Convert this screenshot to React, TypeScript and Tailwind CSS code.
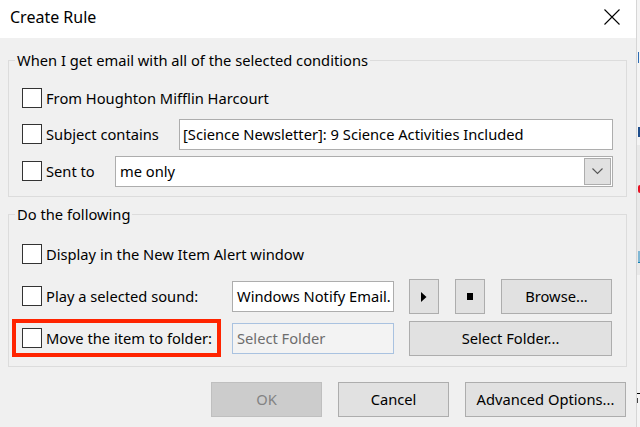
import React from "react";

function Check() {
  return <div className="w-[20px] h-[20px] shrink-0 border border-[#333333] bg-white" />;
}

function Btn({ w, h = "h-[35px]", children, disabled }: { w: string; h?: string; children?: React.ReactNode; disabled?: boolean }) {
  return (
    <div
      className={
        "shrink-0 flex items-center justify-center border " +
        (disabled ? "border-[#bfbfbf] bg-[#cccccc] text-[#838383] " : "border-[#adadad] bg-[#e1e1e1] ") +
        w +
        " " +
        h
      }
    >
      {children}
    </div>
  );
}

export default function App() {
  return (
    <div className="w-[640px] h-[427px] flex overflow-hidden bg-[#f0f0f0] font-['Noto_Sans',sans-serif] text-[14.7px] text-black">
      <div className="w-[636px] h-full flex flex-col shrink-0">
        {/* Title bar */}
        <div className="h-[38px] bg-white flex items-start justify-between pl-[10px] pr-[16px] shrink-0">
          <span className="mt-[6px] leading-[22px] text-[16px]">Create Rule</span>
          <svg className="mt-[9px]" width="16" height="16" viewBox="0 0 16 16">
            <path d="M0.5 0.5 L15.5 15.5 M15.5 0.5 L0.5 15.5" stroke="#000" strokeWidth="1.1" fill="none" />
          </svg>
        </div>

        <div className="flex-1 flex flex-col pl-[8px] pr-[9px] pt-[12px]">
          {/* Group 1 */}
          <fieldset className="border border-[#dcdcdc] p-0 m-0 min-w-0">
            <legend className="ml-[6px] px-[2px] leading-[20px]">When I get email with all of the selected conditions</legend>
            <div className="pl-[13px] pr-[13px] pt-[18px] pb-[9px] flex flex-col">
              <div className="h-[20px] flex items-center">
                <Check />
                <span className="ml-[4px]">From Houghton Mifflin Harcourt</span>
              </div>
              <div className="h-[31px] mt-[11px] flex items-center">
                <div className="w-[157px] flex items-center shrink-0">
                  <Check />
                  <span className="ml-[4px]">Subject contains</span>
                </div>
                <div className="flex-1 h-[31px] border border-[#adadad] bg-white flex items-center pl-[3px] whitespace-nowrap overflow-hidden">
                  [Science Newsletter]: 9 Science Activities Included
                </div>
              </div>
              <div className="h-[31px] mt-[6px] flex items-center">
                <div className="w-[93px] flex items-center shrink-0">
                  <Check />
                  <span className="ml-[4px]">Sent to</span>
                </div>
                <div className="flex-1 h-[31px] border border-[#adadad] bg-white flex items-center justify-between pl-[4px] pr-[1px]">
                  <span>me only</span>
                  <div className="w-[27px] h-[27px] border border-[#adadad] bg-[#e1e1e1] flex items-center justify-center">
                    <svg width="11" height="7" viewBox="0 0 11 7">
                      <path d="M0.5 0.5 L5.5 5.5 L10.5 0.5" stroke="#555" strokeWidth="1.1" fill="none" />
                    </svg>
                  </div>
                </div>
              </div>
            </div>
          </fieldset>

          {/* Group 2 */}
          <fieldset className="border border-[#dcdcdc] p-0 m-0 mt-[7px] min-w-0">
            <legend className="ml-[6px] px-[2px] leading-[20px]">Do the following</legend>
            <div className="pl-[13px] pr-[13px] pt-[20px] pb-[9px] flex flex-col">
              <div className="h-[20px] flex items-center">
                <Check />
                <span className="ml-[4px]">Display in the New Item Alert window</span>
              </div>
              <div className="h-[35px] mt-[15px] flex items-center">
                <div className="w-[210px] flex items-center shrink-0">
                  <Check />
                  <span className="ml-[4px]">Play a selected sound:</span>
                </div>
                <div className="w-[162px] h-[31px] shrink-0 border border-[#adadad] bg-white flex items-center pl-[4px] whitespace-nowrap overflow-hidden">
                  Windows Notify Email.
                </div>
                <div className="ml-[15px]">
                  <Btn w="w-[30px]">
                    <svg width="6" height="10" viewBox="0 0 6 10">
                      <path d="M0 0 L5.5 5 L0 10 Z" fill="#000" />
                    </svg>
                  </Btn>
                </div>
                <div className="ml-[16px]">
                  <Btn w="w-[30px]">
                    <div className="w-[6px] h-[7px] bg-black" />
                  </Btn>
                </div>
                <div className="ml-[16px]">
                  <Btn w="w-[111px]">Browse...</Btn>
                </div>
              </div>
              <div className="h-[38px] mt-[5px] flex items-center">
                <div className="-ml-[10px] w-[209px] h-[38px] shrink-0 border-[4px] border-[#ff2400] flex items-center pl-[6px]">
                  <Check />
                  <span className="ml-[4px] whitespace-nowrap">Move the item to folder:</span>
                </div>
                <div className="ml-[11px] w-[162px] h-[31px] shrink-0 border border-[#a9c2e0] bg-[#f3f3f3] flex items-center pl-[4px] text-[#6d6d6d] whitespace-nowrap overflow-hidden">
                  Select Folder
                </div>
                <div className="ml-[15px]">
                  <Btn w="w-[203px]">Select Folder...</Btn>
                </div>
              </div>
            </div>
          </fieldset>

          {/* Bottom buttons */}
          <div className="mt-[15px] flex pl-[203px]">
            <Btn w="w-[111px]" disabled>OK</Btn>
            <div className="ml-[16px]">
              <Btn w="w-[111px]">Cancel</Btn>
            </div>
            <div className="ml-[16px]">
              <Btn w="w-[161px]">Advanced Options...</Btn>
            </div>
          </div>
        </div>
      </div>

      {/* Background window strip (fragments of the window behind) */}
      <div className="w-[4px] h-full shrink-0 border-l border-[#d6d6d6] bg-[#f4f4f4] flex flex-col">
        <div className="mt-[52px] ml-px w-px h-[11px] bg-[#2e6db4]" />
        <div className="mt-[64px] ml-px w-[2px] h-[10px] bg-[#1f4e8c]" />
        <div className="mt-[8px] h-[130px] bg-[#e9e9e9] flex flex-col">
          <div className="mt-[40px] ml-px w-[2px] h-[8px] rounded-l-full bg-[#e81123]" />
          <div className="mt-[58px] ml-px w-[2px] h-[12px] border-b border-[#0f7fb3] bg-[#7fb7d4]" />
        </div>
        <div className="mt-[118px] w-[3px] h-px bg-black" />
        <div className="mt-[4px] w-px h-[5px] bg-[#444]" />
      </div>
    </div>
  );
}
